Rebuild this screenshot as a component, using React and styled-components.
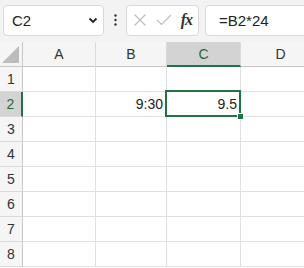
import React from 'react';
import styled, { createGlobalStyle } from 'styled-components';

const GlobalStyle = createGlobalStyle`
  * { box-sizing: border-box; }
  body {
    margin: 0;
    background: #ffffff;
    font-family: "Liberation Sans", Arial, sans-serif;
    overflow: hidden;
  }
`;

const Sheet = styled.div`
  width: 304px;
  height: 268px;
  overflow: hidden;
  background: #ffffff;
`;

const Toolbar = styled.div`
  display: flex;
  align-items: center;
  height: 42px;
  padding: 0 0 2px 3px;
  background: #f3f3f3;
  white-space: nowrap;
`;

const NameBox = styled.div`
  display: flex;
  align-items: center;
  justify-content: space-between;
  width: 101px;
  height: 31px;
  padding: 0 5px 0 8px;
  background: #ffffff;
  border: 1px solid #d9d9d9;
  border-radius: 4px;
  font-size: 15px;
  color: #222;
`;

const Dots = styled.div`
  width: 22px;
  display: flex;
  justify-content: center;
`;

const IconBox = styled.div`
  display: flex;
  align-items: center;
  justify-content: space-between;
  width: 73px;
  height: 31px;
  padding: 0 6px 0 6px;
  background: #ffffff;
  border: 1px solid #d9d9d9;
  border-radius: 4px;
`;

const Fx = styled.span`
  font-family: "Liberation Serif", "Times New Roman", serif;
  font-style: italic;
  font-weight: bold;
  font-size: 16px;
  color: #333;
  letter-spacing: -1px;
`;

const FormulaBox = styled.div`
  flex: 1;
  height: 31px;
  margin-left: 6px;
  margin-right: -8px;
  display: flex;
  align-items: center;
  padding-left: 13px;
  background: #ffffff;
  border: 1px solid #d9d9d9;
  border-radius: 4px;
  font-size: 15px;
  color: #222;
`;

const Grid = styled.div`
  display: grid;
  grid-template-columns: 23px 73px 71px 74px 80px;
  grid-auto-rows: 25px;
  font-size: 14px;
`;

const Corner = styled.div`
  position: relative;
  background: #f5f5f5;
  border-right: 1px solid #c8c8c8;
  border-bottom: 1px solid #c8c8c8;
`;

const ColHead = styled.div`
  display: flex;
  align-items: center;
  justify-content: center;
  background: ${p => (p.$active ? '#d3d3d3' : '#f5f5f5')};
  color: ${p => (p.$active ? '#1e6b40' : '#333')};
  border-right: 1px solid #dadada;
  border-bottom: ${p => (p.$active ? '2px solid #217346' : '1px solid #c8c8c8')};
  padding-top: ${p => (p.$active ? '1px' : '0')};
`;

const RowHead = styled.div`
  display: flex;
  align-items: center;
  justify-content: center;
  background: ${p => (p.$active ? '#d3d3d3' : '#f5f5f5')};
  color: ${p => (p.$active ? '#1e6b40' : '#333')};
  border-right: ${p => (p.$active ? '2px solid #217346' : '1px solid #c8c8c8')};
  border-bottom: 1px solid #dadada;
`;

const Cell = styled.div`
  position: relative;
  z-index: ${p => (p.$selected ? 2 : 'auto')};
  display: flex;
  align-items: center;
  justify-content: flex-end;
  padding-right: 3px;
  color: #222;
  border-right: 1px solid #e1e1e1;
  border-bottom: 1px solid #e1e1e1;
`;

const Selection = styled.div`
  position: absolute;
  left: -2px;
  top: -2px;
  right: -1px;
  bottom: -1px;
  border: 2px solid #217346;
  pointer-events: none;
`;

const Handle = styled.div`
  position: absolute;
  right: -5px;
  bottom: -5px;
  width: 7px;
  height: 7px;
  background: #217346;
  border: 1px solid #ffffff;
`;

const cols = ['A', 'B', 'C', 'D'];
const data = { B2: '9:30', C2: '9.5' };

export default function App() {
  return (
    <Sheet>
      <GlobalStyle />
      <Toolbar>
        <NameBox>
          <span>C2</span>
          <svg width="10" height="7" viewBox="0 0 10 7">
            <path d="M1.5 1.5 L5 5 L8.5 1.5" stroke="#222" strokeWidth="1.8" fill="none" />
          </svg>
        </NameBox>
        <Dots>
          <svg width="3" height="12" viewBox="0 0 3 12">
            <circle cx="1.5" cy="1.5" r="1.2" fill="#333" />
            <circle cx="1.5" cy="6" r="1.2" fill="#333" />
            <circle cx="1.5" cy="10.5" r="1.2" fill="#333" />
          </svg>
        </Dots>
        <IconBox>
          <svg width="14" height="14" viewBox="0 0 14 14">
            <path d="M1.5 1.5 L12.5 12.5 M12.5 1.5 L1.5 12.5" stroke="#bdbdbd" strokeWidth="1.2" fill="none" />
          </svg>
          <svg width="16" height="12" viewBox="0 0 16 12">
            <path d="M1 6 L5.5 10.5 L15 1" stroke="#bdbdbd" strokeWidth="1.2" fill="none" />
          </svg>
          <Fx>fx</Fx>
        </IconBox>
        <FormulaBox>=B2*24</FormulaBox>
      </Toolbar>
      <Grid>
        <Corner>
          <svg width="17" height="17" viewBox="0 0 17 17" style={{ position: 'absolute', right: 3, bottom: 3 }}>
            <path d="M17 0 L17 17 L0 17 Z" fill="#bcbcbc" />
          </svg>
        </Corner>
        {cols.map(c => (
          <ColHead key={c} $active={c === 'C'}>{c}</ColHead>
        ))}
        {[1, 2, 3, 4, 5, 6, 7, 8].map(r => (
          <React.Fragment key={r}>
            <RowHead $active={r === 2}>{r}</RowHead>
            {cols.map(c => {
              const id = c + r;
              const selected = id === 'C2';
              return (
                <Cell key={id} $selected={selected}>
                  {data[id]}
                  {selected && (
                    <Selection>
                      <Handle />
                    </Selection>
                  )}
                </Cell>
              );
            })}
          </React.Fragment>
        ))}
      </Grid>
    </Sheet>
  );
}
